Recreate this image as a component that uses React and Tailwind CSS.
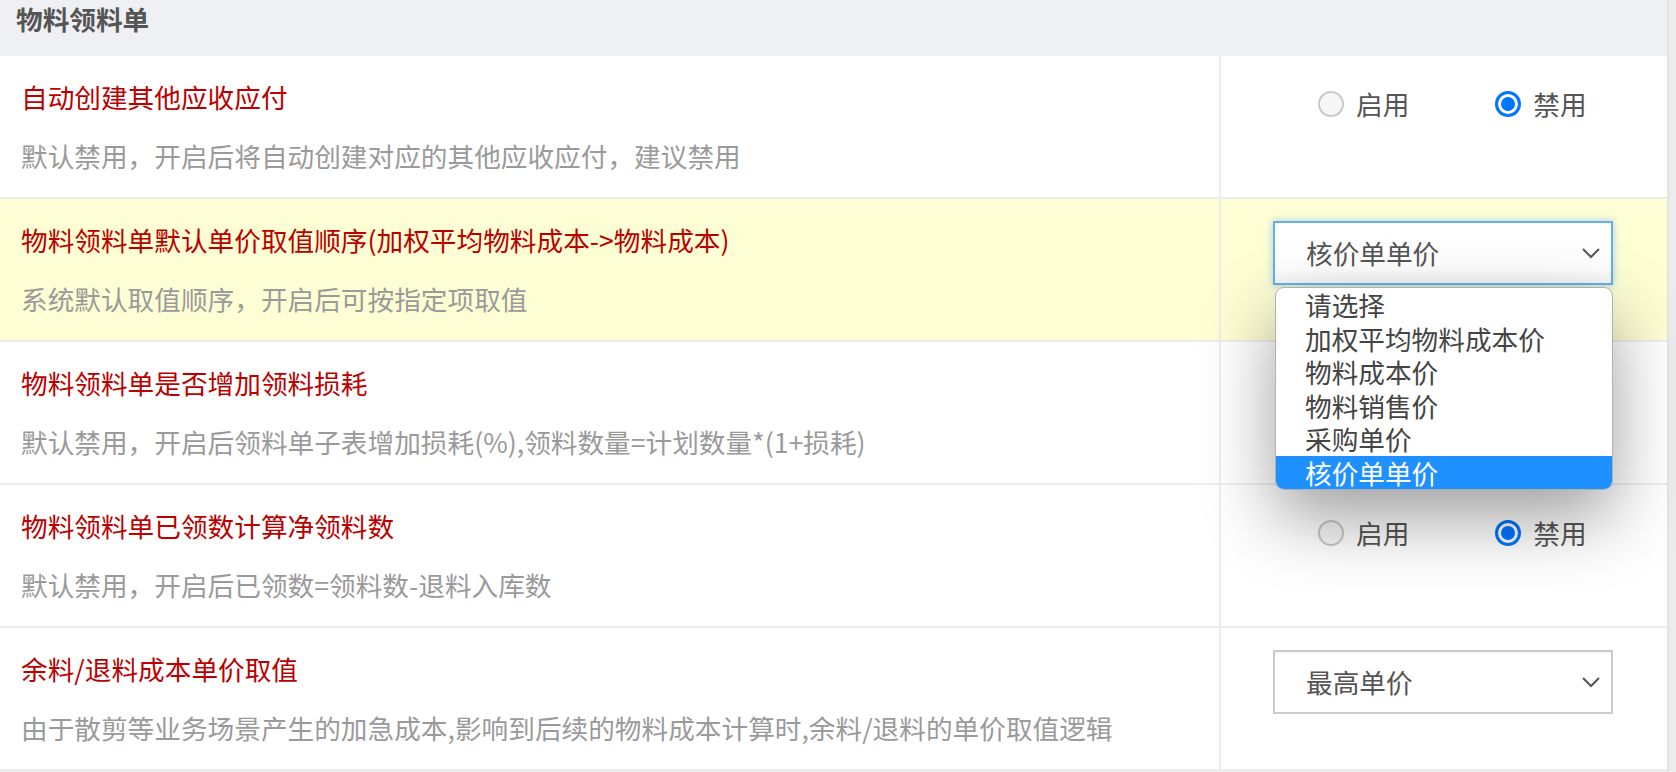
import React from "react";

const FONT = { fontFamily: '"Noto Sans CJK SC", "Noto Sans", sans-serif' };

function Chevron() {
  return (
    <svg width="20" height="12" viewBox="0 0 20 12" className="shrink-0">
      <polyline points="2,2 10,10 18,2" fill="none" stroke="#555" strokeWidth="2" />
    </svg>
  );
}

function Radio({ checked, label, className = "" }) {
  return (
    <div className={"flex items-center h-[36px] " + className}>
      {checked ? (
        <div className="w-[26px] h-[26px] rounded-full border-[3px] border-[#0075ff] bg-white flex items-center justify-center">
          <div className="w-[14px] h-[14px] rounded-full bg-[#0075ff]" />
        </div>
      ) : (
        <div className="w-[26px] h-[26px] rounded-full border-2 border-[#c8c8c8] bg-[#f7f7f7]" />
      )}
      <span className="ml-[12px] text-[26.67px] leading-[36px] text-[#555]">{label}</span>
    </div>
  );
}

function RadioCell() {
  return (
    <div className="flex pt-[30px] pl-[97px]">
      <Radio label="启用" />
      <Radio checked label="禁用" className="ml-[86px]" />
    </div>
  );
}

function SelectBox({ value, focused, children }) {
  return (
    <div className="pt-[22px] pl-[52px]">
      <div className="relative w-[340px]">
        <div
          className={
            "h-[64px] flex items-center justify-between pl-[31px] pr-[10px] bg-white border-2 " +
            (focused
              ? "border-[#66afe9] shadow-[0_0_8px_rgba(102,175,233,0.6),inset_0_-8px_10px_rgba(0,0,0,0.04)]"
              : "border-[#cccccc] shadow-[inset_0_1px_2px_rgba(0,0,0,0.06)]")
          }
        >
          <span className="text-[26.67px] leading-[36px] text-[#555]">{value}</span>
          <Chevron />
        </div>
        {children}
      </div>
    </div>
  );
}

function Dropdown() {
  const items = ["请选择", "加权平均物料成本价", "物料成本价", "物料销售价", "采购单价", "核价单单价"];
  return (
    <div className="absolute z-10 left-[2px] top-[66px] w-[338px] bg-white border border-[#b0b0b0] rounded-[9px] shadow-[0_28px_70px_rgba(0,0,0,0.38)]">
      {items.map((it, i) => (
        <div
          key={it}
          className={
            "h-[33.5px] pl-[29px] text-[25px] leading-[33.5px] whitespace-nowrap " +
            (i === items.length - 1
              ? "bg-[#1e90ff] text-white rounded-b-[8px]"
              : i === 0
              ? "text-[#444] rounded-t-[8px]"
              : "text-[#444]")
          }
        >
          <span className="text-[26.67px]">{it}</span>
        </div>
      ))}
    </div>
  );
}

function Row({ title, desc, bg = "bg-white", right }) {
  return (
    <div className={"flex h-[143px] border-b-2 border-[#ededed] " + bg}>
      <div className="w-[1219px] shrink-0 pl-[21px] pt-[23px]">
        <div className="text-[26.67px] leading-[36px] text-[#bb0000] whitespace-nowrap">{title}</div>
        <div className="mt-[23px] text-[26.67px] leading-[36px] text-[#9a9a9a] whitespace-nowrap">{desc}</div>
      </div>
      <div className="flex-1 border-l-2 border-[#ededed]">{right}</div>
    </div>
  );
}

export default function App() {
  return (
    <div className="w-[1676px] h-[772px] bg-[#ececec] overflow-hidden" style={FONT}>
      <div className="w-[1669px] border-r-2 border-[#e4e4e4] bg-white">
        <div className="h-[56px] bg-[#eff0f4] flex items-start pl-[16px] pt-[1px]">
          <span className="text-[26.67px] leading-[36px] font-bold text-[#555]">物料领料单</span>
        </div>
        <Row
          title="自动创建其他应收应付"
          desc="默认禁用，开启后将自动创建对应的其他应收应付，建议禁用"
          right={<RadioCell />}
        />
        <Row
          bg="bg-[#fefed4]"
          title="物料领料单默认单价取值顺序(加权平均物料成本->物料成本)"
          desc="系统默认取值顺序，开启后可按指定项取值"
          right={
            <SelectBox value="核价单单价" focused>
              <Dropdown />
            </SelectBox>
          }
        />
        <Row
          title="物料领料单是否增加领料损耗"
          desc="默认禁用，开启后领料单子表增加损耗(%),领料数量=计划数量*(1+损耗)"
          right={<div />}
        />
        <Row
          title="物料领料单已领数计算净领料数"
          desc="默认禁用，开启后已领数=领料数-退料入库数"
          right={<RadioCell />}
        />
        <Row
          title="余料/退料成本单价取值"
          desc="由于散剪等业务场景产生的加急成本,影响到后续的物料成本计算时,余料/退料的单价取值逻辑"
          right={<SelectBox value="最高单价" />}
        />
      </div>
    </div>
  );
}
